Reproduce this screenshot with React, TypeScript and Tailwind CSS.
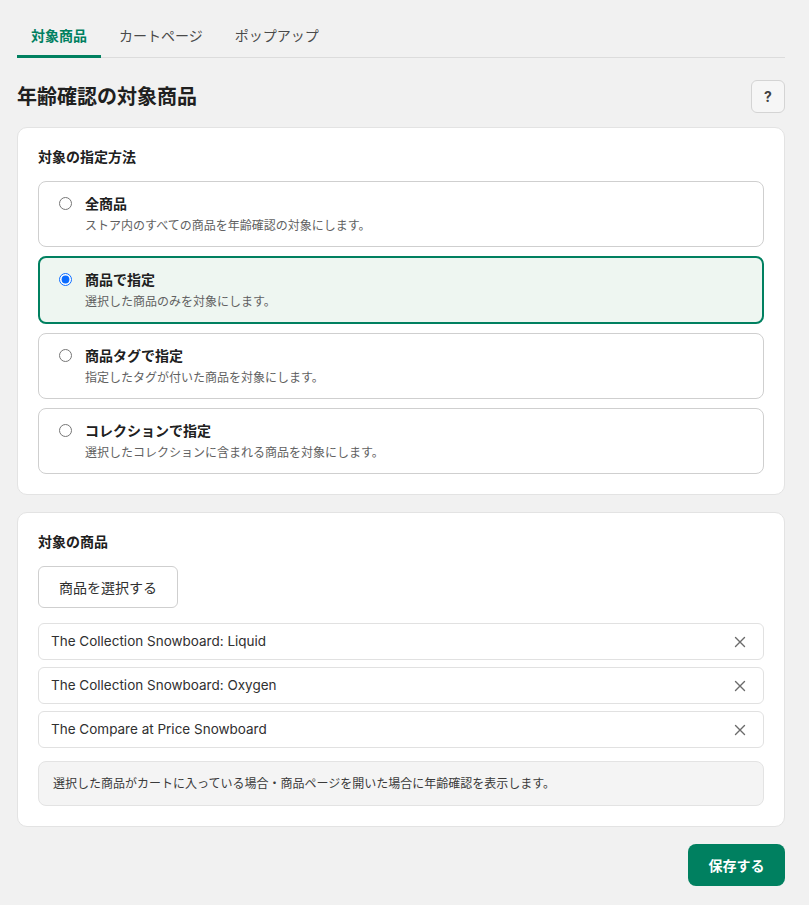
import React, { useState } from "react";

const options = [
  { key: "all", label: "全商品", desc: "ストア内のすべての商品を年齢確認の対象にします。" },
  { key: "product", label: "商品で指定", desc: "選択した商品のみを対象にします。" },
  { key: "tag", label: "商品タグで指定", desc: "指定したタグが付いた商品を対象にします。" },
  { key: "collection", label: "コレクションで指定", desc: "選択したコレクションに含まれる商品を対象にします。" },
];

const initialProducts = [
  "The Collection Snowboard: Liquid",
  "The Collection Snowboard: Oxygen",
  "The Compare at Price Snowboard",
];

const XIcon = () => (
  <svg width="12" height="12" viewBox="0 0 12 12" fill="none" stroke="#6b6b6b" strokeWidth="1.4" strokeLinecap="round">
    <path d="M1.5 1.5l9 9M10.5 1.5l-9 9" />
  </svg>
);

const App = () => {
  const [tab, setTab] = useState(0);
  const [mode, setMode] = useState("product");
  const [products, setProducts] = useState(initialProducts);

  const tabs = ["対象商品", "カートページ", "ポップアップ"];

  return (
    <div
      className="min-h-[905px] bg-[#f1f1f1] pl-[17px] pr-[24px] text-[#303030]"
      style={{ fontFamily: '"Inter", "Noto Sans CJK JP", sans-serif' }}
    >
      <div className="flex gap-[4px] border-b border-[#dcdcdc] pt-[15px]">
        {tabs.map((t, i) => (
          <button
            key={t}
            onClick={() => setTab(i)}
            className={`h-[43px] px-[14px] text-[14px] -mb-px border-b-[3px] ${
              tab === i ? "border-[#008060] text-[#008060] font-bold" : "border-transparent text-[#4a4a4a]"
            }`}
          >
            {t}
          </button>
        ))}
      </div>

      <div className="flex items-center justify-between pt-[22px] pb-[14px]">
        <h1 className="text-[20px] font-bold text-[#202020]">年齢確認の対象商品</h1>
        <button className="w-[34px] h-[33px] rounded-[6px] border border-[#d4d4d4] bg-[#f6f6f6] text-[14px] font-bold text-[#404040]">
          ?
        </button>
      </div>

      <div className="bg-white rounded-[10px] border border-[#e3e3e3] px-[20px] pt-[20px] pb-[20px]">
        <h2 className="h-[18px] text-[14px] font-bold text-[#202020] leading-[18px]">対象の指定方法</h2>
        <div className="mt-[15px] flex flex-col gap-[9px]">
          {options.map((o) => {
            const active = mode === o.key;
            return (
              <label
                key={o.key}
                className={`flex items-start gap-[13px] rounded-[8px] cursor-pointer ${
                  active
                    ? "h-[68px] border-2 border-[#008060] bg-[#eef6f1] pt-[13px] px-[19px]"
                    : "h-[66px] border border-[#cfcfcf] bg-white pt-[13px] px-[20px]"
                }`}
              >
                <input
                  type="radio"
                  name="mode"
                  checked={active}
                  onChange={() => setMode(o.key)}
                  className="mt-[2px] w-[13px] h-[13px] accent-[#0a6cff]"
                />
                <div className="flex flex-col">
                  <div className="h-[18px] text-[14px] font-bold text-[#202020] leading-[18px]">{o.label}</div>
                  <div className="mt-[5px] h-[16px] text-[12px] text-[#616161] leading-[16px]">{o.desc}</div>
                </div>
              </label>
            );
          })}
        </div>
      </div>

      <div className="mt-[17px] bg-white rounded-[10px] border border-[#e3e3e3] px-[20px] pt-[20px] pb-[20px]">
        <h2 className="h-[18px] text-[14px] font-bold text-[#202020] leading-[18px]">対象の商品</h2>
        <button className="mt-[15px] h-[42px] px-[20px] rounded-[6px] border border-[#cfcfcf] bg-white text-[14px] text-[#303030]">
          商品を選択する
        </button>
        <div className="mt-[15px] flex flex-col gap-[7px]">
          {products.map((p) => (
            <div
              key={p}
              className="flex h-[37px] items-center justify-between rounded-[6px] border border-[#e1e1e1] pl-[12px] pr-[17px]"
            >
              <span className="text-[13.5px] text-[#303030]">{p}</span>
              <button onClick={() => setProducts(products.filter((x) => x !== p))}>
                <XIcon />
              </button>
            </div>
          ))}
        </div>
        <div className="mt-[13px] flex h-[45px] items-center rounded-[8px] border border-[#e3e3e3] bg-[#f4f4f4] px-[14px] text-[12px] leading-[17px] text-[#3a3a3a]">
          選択した商品がカートに入っている場合・商品ページを開いた場合に年齢確認を表示します。
        </div>
      </div>

      <div className="flex justify-end pt-[17px] pb-[19px]">
        <button className="h-[42px] w-[97px] rounded-[8px] bg-[#008060] text-[14px] font-bold text-white">
          保存する
        </button>
      </div>
    </div>
  );
};

export default App;
